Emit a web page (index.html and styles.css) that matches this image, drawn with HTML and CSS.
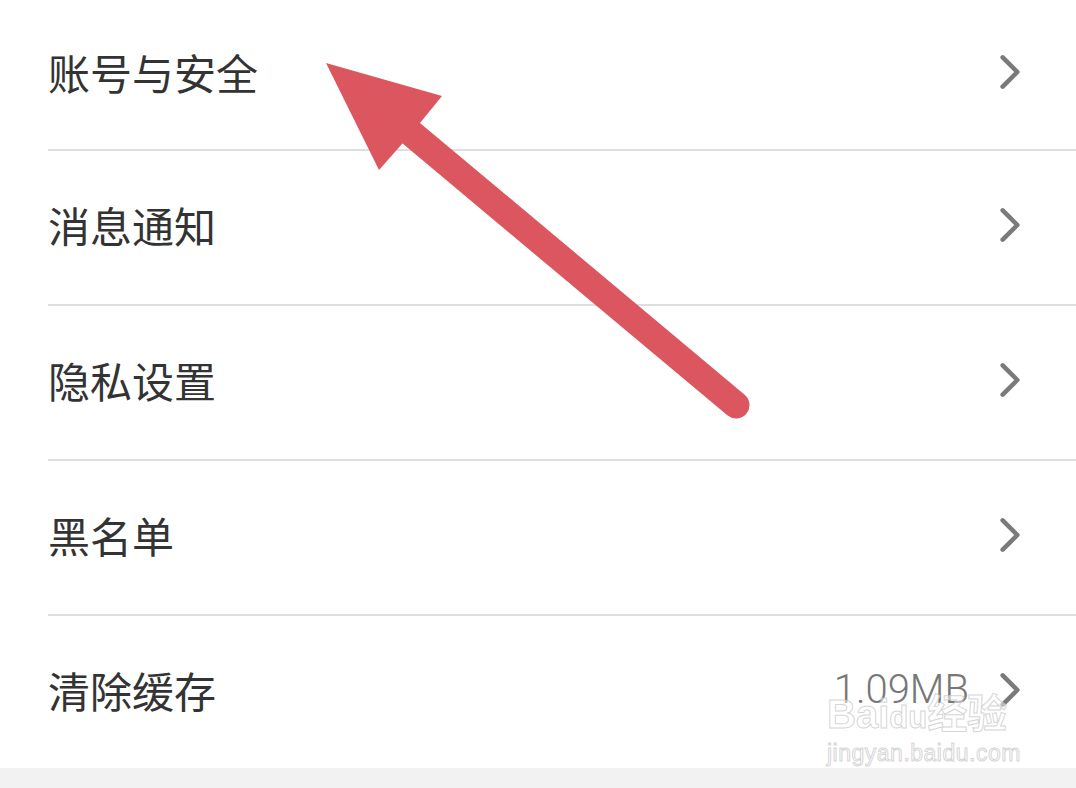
FILE: index.html
```html
<!DOCTYPE html>
<html lang="zh">
<head>
<meta charset="utf-8">
<link rel="stylesheet" href="styles.css">
</head>
<body>
<div class="page">
  <ul class="list">
    <li class="row first"><span class="label">账号与安全</span><span class="right"><svg class="chev" viewBox="0 0 24 40"><path d="M4 4 L20 20 L4 36"/></svg></span></li>
    <li class="row"><span class="label">消息通知</span><span class="right"><svg class="chev" viewBox="0 0 24 40"><path d="M4 4 L20 20 L4 36"/></svg></span></li>
    <li class="row"><span class="label">隐私设置</span><span class="right"><svg class="chev" viewBox="0 0 24 40"><path d="M4 4 L20 20 L4 36"/></svg></span></li>
    <li class="row"><span class="label">黑名单</span><span class="right"><svg class="chev" viewBox="0 0 24 40"><path d="M4 4 L20 20 L4 36"/></svg></span></li>
    <li class="row last"><span class="label">清除缓存</span><span class="right"><span class="value">1.09MB</span><svg class="chev" viewBox="0 0 24 40"><path d="M4 4 L20 20 L4 36"/></svg></span></li>
  </ul>
  <div class="footer"></div>

  <svg class="arrow" width="1076" height="788" viewBox="0 0 1076 788">
    <line x1="736" y1="405" x2="411" y2="133" stroke="#dc5660" stroke-width="27" stroke-linecap="round"/>
    <polygon points="326,63 442,96 420,123 402,144 379,170" fill="#dc5660"/>
  </svg>

  <div class="watermark">
    <div class="wm-brand">Bai<span class="wm-du">du</span>经验</div>
    <div class="wm-url">jingyan.baidu.com</div>
  </div>
</div>
</body>
</html>
```
FILE: styles.css
```css
html, body {
  margin: 0;
  padding: 0;
  background: #ffffff;
}
.page {
  position: relative;
  width: 1076px;
  height: 788px;
  overflow: hidden;
  font-family: "Noto Sans CJK SC", "Noto Sans", sans-serif;
}
.list {
  list-style: none;
  margin: 0;
  padding: 0 0 0 48px;
}
.row {
  display: flex;
  align-items: center;
  justify-content: space-between;
  box-sizing: border-box;
  height: 155px;
  padding: 0 55px 5px 0;
  border-bottom: 2px solid #dedede;
}
.row.first {
  height: 151px;
}
.row.last {
  height: 152px;
  border-bottom: none;
}
.label {
  font-size: 42px;
  color: #333333;
  line-height: 1;
}
.right {
  display: flex;
  align-items: center;
  gap: 30px;
}
.value {
  font-family: "Roboto", "Liberation Sans", sans-serif;
  font-weight: 300;
  font-size: 40px;
  color: #777777;
  line-height: 1;
}
.chev {
  width: 22px;
  height: 38px;
  fill: none;
  stroke: #7a7a7a;
  stroke-width: 5;
  stroke-linecap: round;
  stroke-linejoin: round;
}
.footer {
  height: 20px;
  background: #f2f2f2;
}
.arrow {
  position: absolute;
  left: 0;
  top: 0;
}
.watermark {
  position: absolute;
  left: 827px;
  top: 692px;
  display: flex;
  flex-direction: column;
  align-items: flex-start;
  color: rgba(255, 255, 255, 0.5);
  -webkit-text-stroke: 1px rgba(195, 195, 195, 0.7);
}
.wm-brand {
  font-family: "Liberation Sans", "Noto Sans CJK SC", sans-serif;
  font-size: 40px;
  font-weight: 700;
  line-height: 44px;
}
.wm-du {
  font-size: 31px;
}
.wm-url {
  font-family: "Liberation Sans", sans-serif;
  font-size: 23px;
  line-height: 26px;
  letter-spacing: 0.5px;
}
```
